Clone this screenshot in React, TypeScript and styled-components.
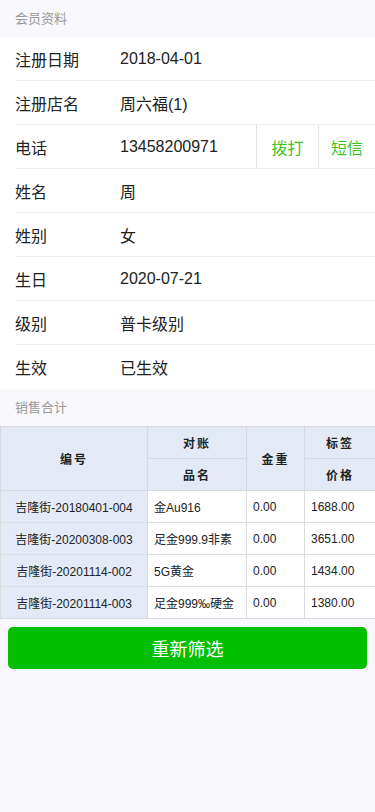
import styled, { createGlobalStyle } from 'styled-components';

const GlobalStyle = createGlobalStyle`
    html, body {
        margin: 0;
        padding: 0;
        background: #f8f7fc;
        font-family: "Liberation Sans", "Noto Sans CJK SC", sans-serif;
    }
`

const Page = styled.div`
    width: 375px;
    min-height: 812px;
    background: #f8f7fc;
`

const SectionTitle = styled.div`
    height: 37px;
    line-height: 37px;
    padding-left: 15px;
    font-size: 13px;
    color: #999;
`

const List = styled.div`
    background: #fff;
    padding-left: 15px;
`

const Row = styled.div<{ $last?: boolean }>`
    display: flex;
    align-items: center;
    height: 44px;
    border-bottom: ${p => (p.$last ? 'none' : '1px solid #eee')};
    box-sizing: border-box;
    font-size: 16px;
    color: #222;
`

const Label = styled.div`
    width: 105px;
`

const Value = styled.div`
    flex: 1;
`

const ActionBtn = styled.div<{ $w: number }>`
    width: ${p => p.$w}px;
    height: 100%;
    display: flex;
    align-items: center;
    justify-content: center;
    border-left: 1px solid #e2e2e2;
    box-sizing: border-box;
    color: #3cc51f;
    font-size: 16px;
`

const Table = styled.table`
    width: 375px;
    border-collapse: collapse;
    table-layout: fixed;
    font-size: 12px;
    background: #fff;
`

const Th = styled.th`
    height: 31px;
    border: 1px solid #d6d9df;
    background: #e3eaf6;
    font-weight: bold;
    letter-spacing: 2px;
    color: #222;
    padding: 0;
`

const Td = styled.td<{ $key?: boolean }>`
    height: 31px;
    border: 1px solid #dcdcdc;
    background: ${p => (p.$key ? '#e3eaf6' : '#fff')};
    text-align: ${p => (p.$key ? 'center' : 'left')};
    padding: 0 0 0 ${p => (p.$key ? 0 : 6)}px;
    color: #222;
    white-space: nowrap;
`

const ButtonWrap = styled.div`
    padding: 8px 8px;
`

const Button = styled.button`
    width: 100%;
    height: 42px;
    border: none;
    border-radius: 5px;
    background: #04be02;
    color: #fff;
    font-family: inherit;
    font-size: 18px;
`

const info = [
    ['注册日期', '2018-04-01'],
    ['注册店名', '周六福(1)'],
    ['电话', '13458200971'],
    ['姓名', '周'],
    ['姓别', '女'],
    ['生日', '2020-07-21'],
    ['级别', '普卡级别'],
    ['生效', '已生效'],
]

const sales = [
    ['吉隆街-20180401-004', '金Au916', '0.00', '1688.00'],
    ['吉隆街-20200308-003', '足金999.9非素', '0.00', '3651.00'],
    ['吉隆街-20201114-002', '5G黄金', '0.00', '1434.00'],
    ['吉隆街-20201114-003', '足金999‰硬金', '0.00', '1380.00'],
]

export default function App() {
    return (
        <Page>
            <GlobalStyle />
            <SectionTitle>会员资料</SectionTitle>
            <List>
                {info.map(([k, v], i) => (
                    <Row key={k} $last={i === info.length - 1}>
                        <Label>{k}</Label>
                        <Value>{v}</Value>
                        {k === '电话' && (
                            <>
                                <ActionBtn $w={62}>拨打</ActionBtn>
                                <ActionBtn $w={57}>短信</ActionBtn>
                            </>
                        )}
                    </Row>
                ))}
            </List>
            <SectionTitle>销售合计</SectionTitle>
            <Table>
                <colgroup>
                    <col style={{ width: 147 }} />
                    <col style={{ width: 99 }} />
                    <col style={{ width: 58 }} />
                    <col style={{ width: 71 }} />
                </colgroup>
                <thead>
                    <tr>
                        <Th rowSpan={2}>编号</Th>
                        <Th>对账</Th>
                        <Th rowSpan={2}>金重</Th>
                        <Th>标签</Th>
                    </tr>
                    <tr>
                        <Th>品名</Th>
                        <Th>价格</Th>
                    </tr>
                </thead>
                <tbody>
                    {sales.map(r => (
                        <tr key={r[0]}>
                            <Td $key>{r[0]}</Td>
                            <Td>{r[1]}</Td>
                            <Td>{r[2]}</Td>
                            <Td>{r[3]}</Td>
                        </tr>
                    ))}
                </tbody>
            </Table>
            <ButtonWrap>
                <Button>重新筛选</Button>
            </ButtonWrap>
        </Page>
    )
}
